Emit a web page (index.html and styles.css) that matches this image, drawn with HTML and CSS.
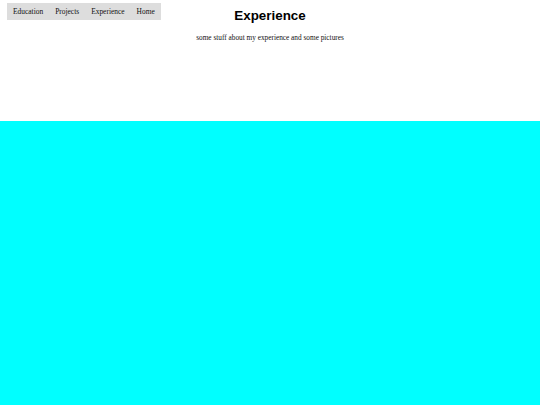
FILE: index.html
```html
<!DOCTYPE html>
<html>
<head>
<meta charset="utf-8">
<link rel="stylesheet" href="styles.css">
</head>
<body>
<header class="top">
  <nav class="nav">
    <a class="nav-item">Education</a>
    <a class="nav-item">Projects</a>
    <a class="nav-item">Experience</a>
    <a class="nav-item">Home</a>
  </nav>
  <div class="intro">
    <h1 class="title">Experience</h1>
    <p class="subtitle">some stuff about my experience and some pictures</p>
  </div>
</header>
<main class="content"></main>
</body>
</html>
```
FILE: styles.css
```css
html, body {
  margin: 0;
  padding: 0;
  height: 100%;
}
body {
  display: flex;
  flex-direction: column;
  font-family: "Liberation Serif", serif;
}
.top {
  display: grid;
  height: 121px;
  flex: none;
}
.nav, .intro {
  grid-area: 1 / 1;
}
.nav {
  justify-self: start;
  align-self: start;
  margin: 3px 0 0 7px;
  background: #dddddd;
  display: flex;
  height: 17px;
  align-items: center;
  position: relative;
  z-index: 1;
}
.nav-item {
  font-size: 7.45px;
  color: #111;
  padding: 0 6px;
  line-height: 17px;
}
.intro {
  text-align: center;
  padding-top: 8px;
}
.title {
  margin: 0;
  font-family: "Liberation Sans", Arial, sans-serif;
  font-weight: bold;
  font-size: 13.4px;
  line-height: 16px;
  color: #000;
}
.subtitle {
  margin: 10px 0 0;
  font-size: 7.3px;
  line-height: 8px;
  color: #111;
}
.content {
  flex: 1;
  background: #00ffff;
}
```
